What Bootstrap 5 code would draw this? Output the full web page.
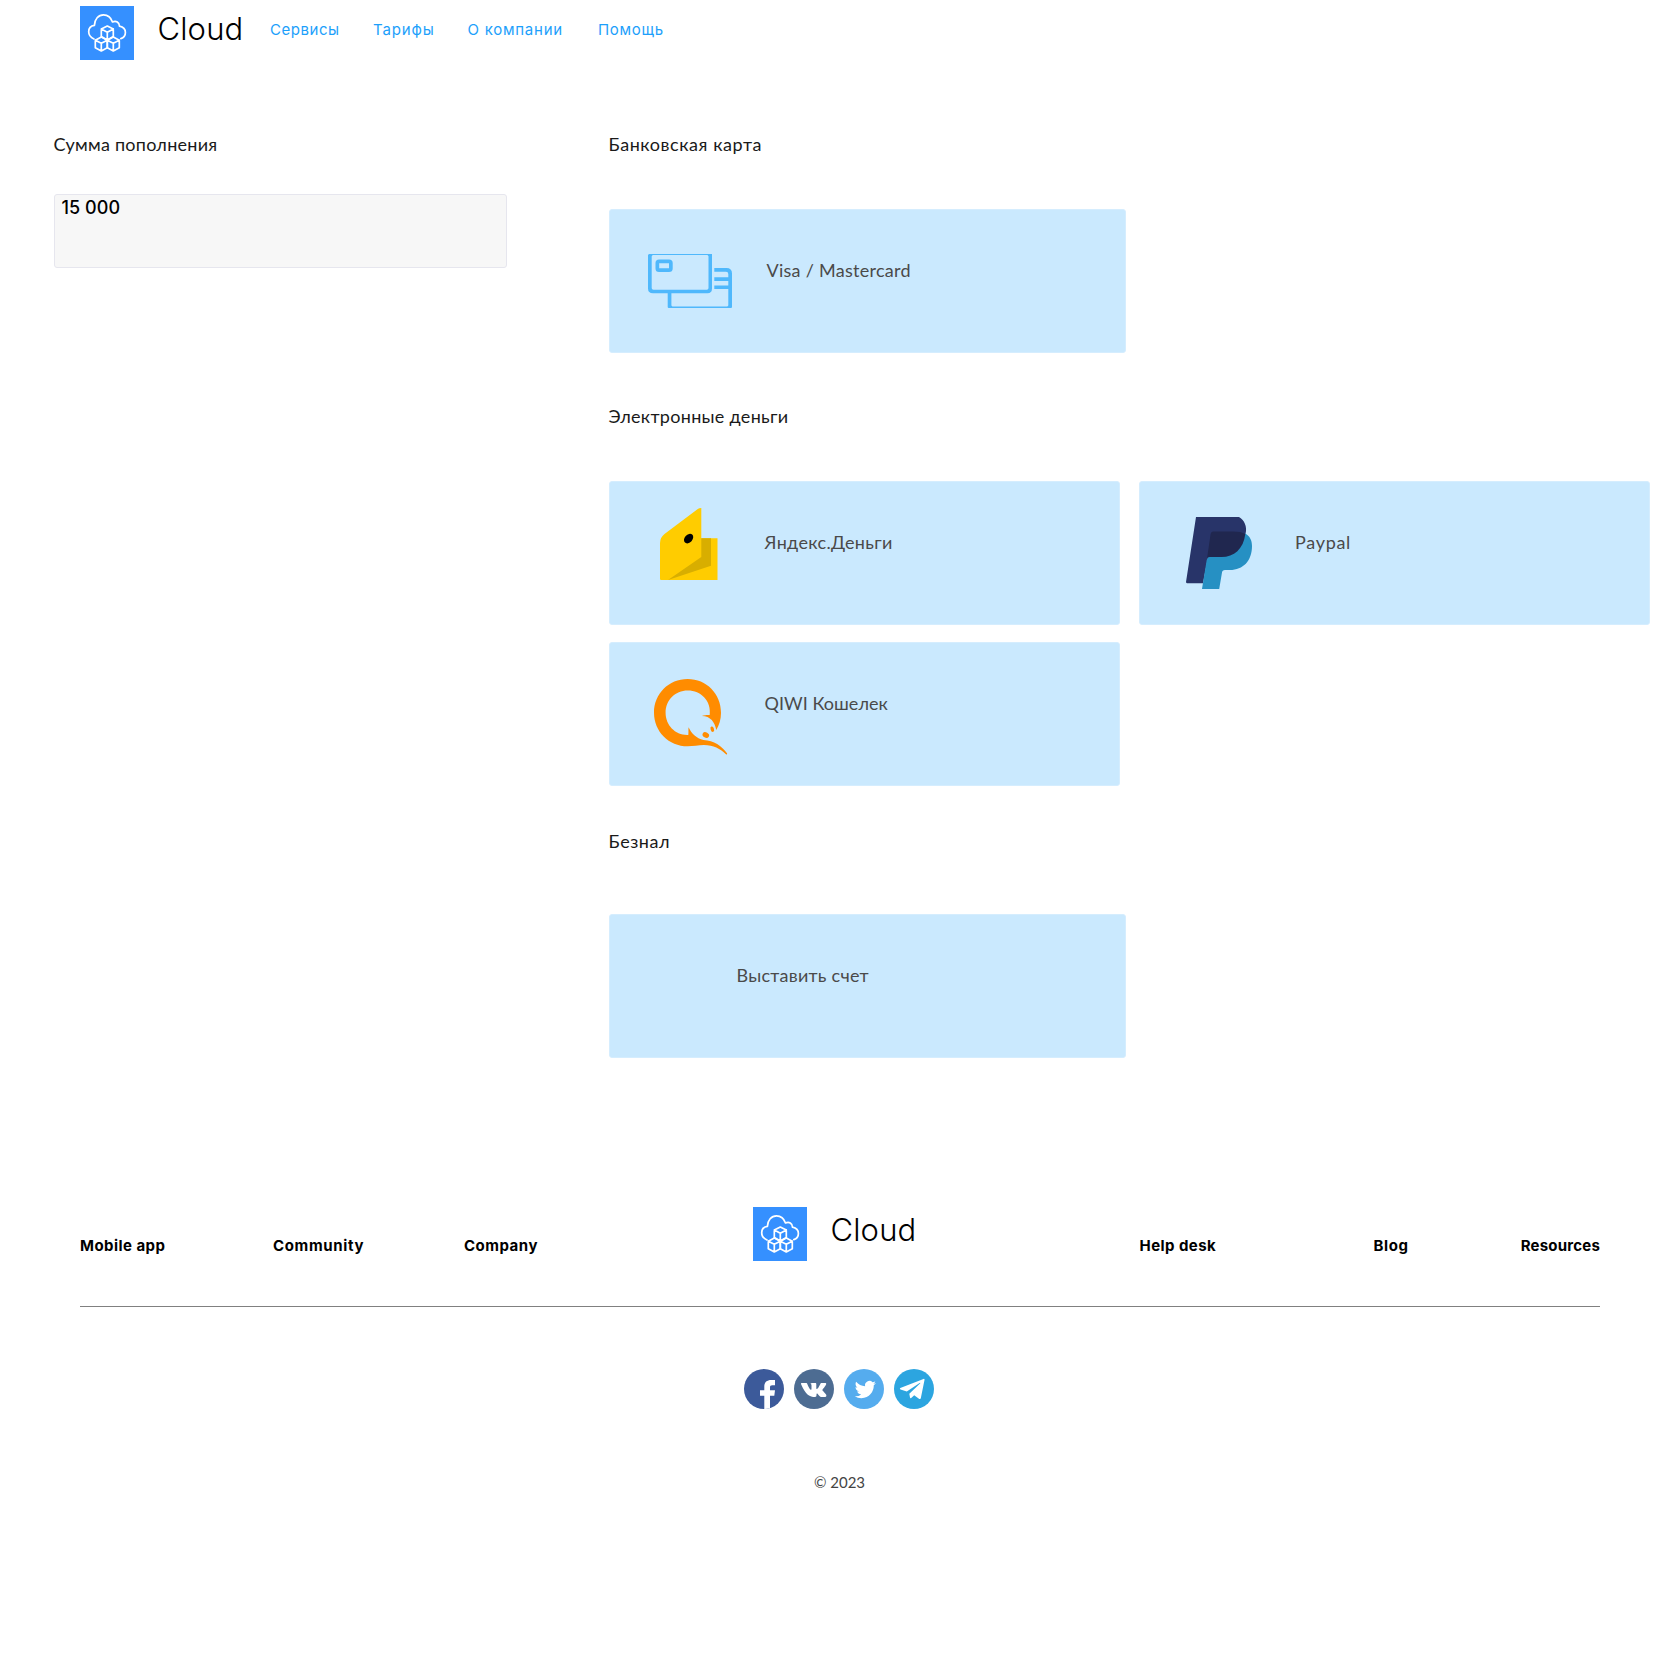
<!DOCTYPE html>
<html lang="ru">
<head>
<meta charset="utf-8">
<meta name="viewport" content="width=device-width, initial-scale=1">
<title>Cloud</title>
<link rel="stylesheet" href="https://cdn.jsdelivr.net/npm/bootstrap@5.3.0/dist/css/bootstrap.min.css">
<style>
  body { min-height: 1666px; min-width: 1680px; background: #fff; color: #000; font-family: Inter, "Noto Sans", sans-serif; }
  svg { display: block; flex: none; }
  .gutter-x { padding-left: 80px; padding-right: 80px; }
  .topbar { height: 60px; padding-top: 6px; }
  .brand-name { font-size: 31px; font-weight: 300; line-height: 36px; letter-spacing: .15px; margin: 5px 0 0 23.5px; }
  .brand-link { color: #000; text-decoration: none; width: 190px; }
  .topbar .nav-link { padding: 0; margin-top: 12px; color: #1d9ffb; font-size: 15px; font-weight: 400; line-height: 24px; }
  .w-services { width: 103px; letter-spacing: .55px; }
  .w-plans { width: 94.5px; letter-spacing: .85px; }
  .w-about { width: 130.5px; letter-spacing: .75px; }
  .w-help { letter-spacing: .7px; }
  .page-main { padding-top: 72px; }
  .col-amount { width: 608.5px; padding-left: 53.5px; flex: none; }
  .col-methods { width: 1042px; flex: none; }
  .group-title { font: 400 18px/24px Lato, "Noto Sans", sans-serif; color: #1a1a1a; margin: 0 0 53px; }
  .amount-title { margin-bottom: 38px; letter-spacing: .25px; }
  .amount-input { width: 453px; height: 74px; padding: 1px 7px 0; resize: none; background: #f7f7f7; border: 1px solid #e6e6ee; border-radius: 3px; color: #000; font-size: 18px; font-weight: 500; line-height: 24px; letter-spacing: .05px; overflow: hidden; }
  .group-card { margin-bottom: 51.5px; }
  .group-card, .group-money, .group-invoice { margin-top: 0; }
  .group-money { margin-bottom: 43px; }
  .group-invoice .group-title { margin-bottom: 61.5px; }
  .pay-tile { width: 511px; height: 143.5px; background: #cae9fe; border: 1px solid #d5edfe; border-radius: 3px; color: #4a4a4a; text-decoration: none; font: 400 18px/24px Lato, "Noto Sans", sans-serif; }
  .pay-tile.wide { width: 517px; }
  .pay-tile .tile-text { margin-top: 48px; }
  .tile-icon { width: 155px; flex: none; }
  .tile-icon.ic-visa { width: 157px; padding: 44px 0 0 38.5px; }
  .ic-yandex { padding: 26px 0 0 50px; }
  .ic-paypal { padding: 35px 0 0 45.5px; }
  .ic-qiwi { padding: 35.5px 0 0 44.5px; }
  .ic-none { width: 127px; }
  .tile-grid { gap: 17.5px 19.5px; }
  .ls-card { letter-spacing: .55px; } .ls-emoney { letter-spacing: .3px; } .ls-short { letter-spacing: .55px; }
  .ls-visa { letter-spacing: .27px; } .ls-ya { letter-spacing: .32px; } .ls-pp { letter-spacing: .7px; } .ls-qiwi { letter-spacing: .03px; } .ls-inv { letter-spacing: .25px; }
  .site-footer { padding-top: 149px; }
  .footer-link { font-size: 15px; font-weight: 700; line-height: 24px; margin-top: 27.5px; color: #000; text-decoration: none; flex: none; }
  .f-mobile { width: 193px; letter-spacing: .45px; }
  .f-community { width: 191px; letter-spacing: .65px; }
  .f-company { width: 289px; letter-spacing: .5px; }
  .f-brand { width: 386.5px; }
  .f-help { width: 234px; letter-spacing: .45px; }
  .f-blog { letter-spacing: .6px; }
  .f-resources { letter-spacing: .2px; }
  .footer-line { height: 1px; background: #808080; margin-top: 45px; }
  .socials { gap: 10px; margin-top: 62px; padding-right: 2px; }
  .copyright { font: 400 15px/24px Lato, sans-serif; color: #444; margin-top: 61px; padding-right: 1px; }
</style>
<script src="https://cdn.jsdelivr.net/npm/bootstrap@5.3.0/dist/js/bootstrap.bundle.min.js"></script>
</head>
<body>

<svg width="0" height="0" class="position-absolute" aria-hidden="true">
  <symbol id="cloud-logo" viewBox="0 0 54 54">
    <rect width="54" height="54" fill="#3590ff"/>
    <g fill="none" stroke="#fff" stroke-width="1.7" stroke-linejoin="round" stroke-linecap="round">
      <path d="M14 33C10.5 31.500 8.700 29 8.700 25.800C8.700 22.300 11 19.800 14.400 19.400C14.600 13 18.500 8.800 23.500 8.800C27.500 8.800 31 11.500 32.500 16C36 14.200 39.500 16.400 39.500 20.200C43 21 45.400 23.500 45.400 26.500C45.400 29.500 43.500 31.800 40.800 32.600"/>
      <path d="M27.300 20L33.300 23V30.500L27.300 34L21.300 30.500V23ZM21.300 23L27.300 26.300L33.300 23M27.300 26.300V34"/>
      <path d="M21.300 31L27.300 34.200V41.800L21.300 45L15.300 41.800V34.200ZM15.300 34.200L21.300 37.200L27.300 34.200M21.300 37.200V45"/>
      <path d="M33.300 31L39.300 34.200V41.800L33.300 45L27.300 41.800V34.200ZM27.300 34.200L33.300 37.200L39.300 34.200M33.300 37.200V45"/>
    </g>
  </symbol>
</svg>

<header class="topbar gutter-x d-flex align-items-start">
  <a class="brand-link d-flex align-items-start" href="#"><svg width="54" height="54"><use href="#cloud-logo"/></svg><span class="brand-name">Cloud</span></a>
  <nav class="nav flex-nowrap">
    <a class="nav-link w-services" href="#">Сервисы</a>
    <a class="nav-link w-plans" href="#">Тарифы</a>
    <a class="nav-link w-about" href="#">О компании</a>
    <a class="nav-link w-help" href="#">Помощь</a>
  </nav>
</header>

<main class="page-main d-flex align-items-start">
  <section class="col-amount">
    <h2 class="group-title amount-title">Сумма пополнения</h2>
    <textarea class="amount-input d-block" aria-label="Сумма пополнения">15 000</textarea>
  </section>

  <div class="col-methods">
    <section class="group-card">
      <h2 class="group-title ls-card">Банковская карта</h2>
      <a class="pay-tile wide d-flex align-items-start" href="#">
        <span class="tile-icon ic-visa">
          <svg width="84" height="54" viewBox="0 0 84 54" fill="#4fb8fc">
            <path fill-rule="evenodd" d="M1 0H64V34.500Q64 39.300 59.500 39.300H5Q0 39.300 0 34.500V1ZM3.700 2.200V34Q3.700 35.800 5.500 35.800H58.800Q60.500 35.800 60.500 34V2.200L59.500 1H4.700Z"/>
            <path fill-rule="evenodd" d="M11 5.500H21Q24.700 5.500 24.700 9V14.500Q24.700 18 21 18H11Q7.500 18 7.500 14.500V9Q7.500 5.500 11 5.500ZM11.200 9.200V14.300H21V9.200Z"/>
            <path d="M66.300 14H78.500Q84 14 84 19.500V53Q84 54 83 54H20.800Q19.700 54 19.700 53V38H23.400V51.500L24.400 52.500H79.300L80.300 51.500V35H66.300V31.500H80.300V27H66.300V23.200H80.300V20Q80.300 17.700 78 17.700H66.300Z"/>
          </svg>
        </span>
        <span class="tile-text ls-visa">Visa / Mastercard</span>
      </a>
    </section>

    <section class="group-money">
      <h2 class="group-title ls-emoney">Электронные деньги</h2>
      <div class="tile-grid d-flex flex-wrap">
        <a class="pay-tile d-flex align-items-start" href="#">
          <span class="tile-icon ic-yandex">
            <svg width="58" height="72" viewBox="0 0 58 72">
              <path fill="#fc0" d="M0 35Q0 29.500 4.500 26L37.800 1Q39 0 41.300 0V30.300H57.500V72H1Q0 72 0 71Z"/>
              <path fill="#d8ae00" d="M41.300 30.300H51V57.800L8 72L41.300 49Z"/>
              <ellipse cx="28.600" cy="30.600" rx="5.400" ry="3.900" transform="rotate(-48 28.600 30.600)"/>
            </svg>
          </span>
          <span class="tile-text ls-ya">Яндекс.Деньги</span>
        </a>
        <a class="pay-tile d-flex align-items-start" href="#">
          <span class="tile-icon ic-paypal">
            <svg width="67" height="72" viewBox="0 0 67 72">
              <path fill="#283469" d="M10 0H53C58 3 61.500 9 59.500 17L50 35L22 40L17 66.200H1Q0 66 0 65Z"/>
              <path fill="#2690c3" d="M59 16.500C64 19 66 23.500 66 29C66 44 57 53 44 53H39Q36.200 53 36 55.500L33.200 72H16L20.700 43L24 36L50 33Z"/>
              <path fill="#20274f" d="M27 14.500H47C52.500 14.500 56.500 15.300 59.300 17C57.500 32 48 40 35.500 40H23.500Q21.600 40 21 42L24.600 17Q25 14.500 27 14.500Z"/>
            </svg>
          </span>
          <span class="tile-text ls-pp">Paypal</span>
        </a>
        <a class="pay-tile d-flex align-items-start" href="#">
          <span class="tile-icon ic-qiwi">
            <svg width="74" height="77" viewBox="0 0 74 77" fill="#ff8c00">
              <path d="M62.300 51C60.800 43 56.500 37 47.900 36.900C50.500 35.900 53 36 55.700 36C57.500 22 47 11.500 33.700 11.500C21 11.500 11.600 21.300 11.600 33.800C11.600 46.500 21.500 56.500 34.300 55.900C34.700 53.500 34.200 50.500 34.600 48.300C37 54 42.500 59.500 49.500 61C60 61.800 67.500 66.500 73.200 74.500L72.500 75.800C66 69.500 59.500 66 50 66C44 66 39.500 67.300 33.600 67.300C14.800 67.300 0 52.500 0 33.700C0 14.800 14.800 0 33.600 0C52.500 0 67 14.800 67 33.700C67 40.500 65.300 45.800 62.300 51Z"/>
              <ellipse cx="51.800" cy="56" rx="3.400" ry="2.700" transform="rotate(30 51.800 56)"/>
              <ellipse cx="58.300" cy="50.200" rx="1.700" ry="2.800" transform="rotate(-18 58.300 50.200)"/>
            </svg>
          </span>
          <span class="tile-text ls-qiwi">QIWI Кошелек</span>
        </a>
      </div>
    </section>

    <section class="group-invoice">
      <h2 class="group-title ls-short">Безнал</h2>
      <a class="pay-tile wide d-flex align-items-start" href="#">
        <span class="tile-icon ic-none"></span>
        <span class="tile-text ls-inv">Выставить счет</span>
      </a>
    </section>
  </div>
</main>

<footer class="site-footer gutter-x">
  <div class="d-flex align-items-start">
    <a class="footer-link f-mobile" href="#">Mobile app</a>
    <a class="footer-link f-community" href="#">Community</a>
    <a class="footer-link f-company" href="#">Company</a>
    <a class="brand-link f-brand d-flex align-items-start flex-shrink-0" href="#"><svg width="54" height="54"><use href="#cloud-logo"/></svg><span class="brand-name">Cloud</span></a>
    <a class="footer-link f-help" href="#">Help desk</a>
    <a class="footer-link f-blog" href="#">Blog</a>
    <a class="footer-link f-resources ms-auto" href="#">Resources</a>
  </div>
  <div class="footer-line"></div>
  <div class="socials d-flex justify-content-center">
    <a href="#" aria-label="Facebook"><svg width="40" height="40" viewBox="0 0 40 40"><circle cx="20" cy="20" r="20" fill="#3c5a9a"/><path fill="#fff" d="M20.300 39.900V26.800H16V21.300H20.300V17.600C20.300 13 23 11 27.200 11H31V16.300H28.300C26.500 16.300 26 17 26 18.600V21.300H31L30.300 26.800H26V39.200Q23 40 20.300 39.900Z"/></svg></a>
    <a href="#" aria-label="VK"><svg width="40" height="40" viewBox="0 0 40 40"><circle cx="20" cy="20" r="20" fill="#4d6c92"/><path fill="#fff" d="M7.500 14h4.500c.8 0 1 .4 1.300 1 1 2.700 2.600 5.600 3.500 5.800.6 0 .7-.4.7-1.400v-2.800c0-1.300-.5-1.700-1.200-2 .3-.5 1-.7 2-.7h3c.9 0 1 .6 1 1.300v4c0 .5.3.9.600.9.8 0 2.600-3.200 3.400-5 .3-.7.6-1 1.400-1h3.300c1.200 0 1.400.6 1.100 1.300-.8 1.800-3.400 4.800-3.600 5.200-.3.500-.2.7.2 1.200.9 1 2.800 2.700 3.500 4 .5.900 0 2.200-1 2.200h-4c-.7 0-1.200-.3-1.700-.9-1-1-1.800-2.500-2.400-2.500-.5 0-.6.500-.6 1.500 0 1.300-.3 1.900-1.600 1.900-5 0-9.300-2.400-13.700-12.600C6.900 14.600 7 14 7.500 14Z"/></svg></a>
    <a href="#" aria-label="Twitter"><svg width="40" height="40" viewBox="0 0 40 40"><circle cx="20" cy="20" r="20" fill="#55acee"/><path fill="#fff" transform="translate(10.700 9.900) scale(.885)" d="M23.950 4.570a10 10 0 0 1-2.820.77 4.960 4.960 0 0 0 2.160-2.720c-.95.550-2 .95-3.130 1.180a4.920 4.920 0 0 0-8.380 4.480C7.690 8.090 4.070 6.130 1.640 3.160a4.820 4.820 0 0 0-.67 2.480c0 1.710.87 3.210 2.190 4.100a4.900 4.900 0 0 1-2.230-.62v.06a4.920 4.920 0 0 0 3.950 4.830 5 5 0 0 1-2.210.08 4.940 4.940 0 0 0 4.600 3.420A9.870 9.870 0 0 1 0 19.540a14 14 0 0 0 7.550 2.210c9.050 0 14-7.500 14-13.990 0-.21 0-.42-.02-.63a9.940 9.940 0 0 0 2.460-2.550z"/></svg></a>
    <a href="#" aria-label="Telegram"><svg width="40" height="40" viewBox="0 0 40 40"><circle cx="20" cy="20" r="20" fill="#2ca5e0"/><path fill="#fff" d="M6.300 19.100L29.500 9.900Q30.700 9.500 30.500 11L26.800 29.300Q26.500 30.500 25.300 29.900L20.200 26.300L17.200 29.100Q16.300 29.700 16 28.600L15.300 24.800L26.300 14.300Q26.500 13.600 25.600 14L12.800 22.500L6.500 20.500Q5.300 19.800 6.300 19.100Z"/></svg></a>
  </div>
  <div class="copyright text-center">© 2023</div>
</footer>
</body>
</html>
